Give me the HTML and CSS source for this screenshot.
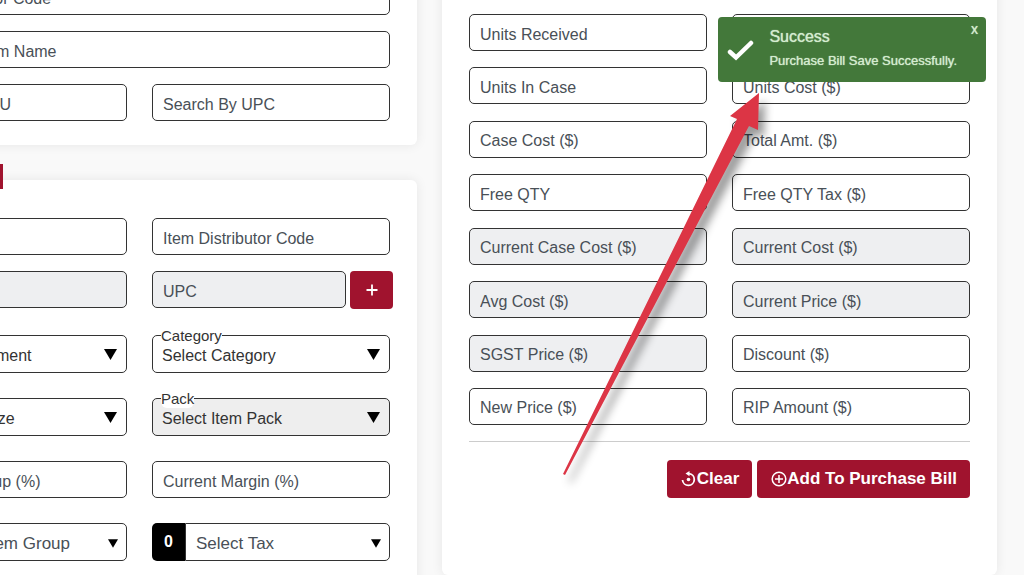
FILE: index.html
```html
<!DOCTYPE html>
<html lang="en">
<head>
<meta charset="utf-8">
<title>Purchase Bill</title>
<link rel="stylesheet" href="styles.css">
</head>
<body>
<main class="page">
  <div class="column">
    <section class="card card-search">
      <input class="field" type="text" placeholder="Item Distributor Code" aria-label="Item Distributor Code">
      <input class="field" type="text" placeholder="Search By Item Name" aria-label="Search By Item Name">
      <div class="pair">
        <input class="field" type="text" placeholder="Search By SKU" aria-label="Search By SKU">
        <input class="field" type="text" placeholder="Search By UPC" aria-label="Search By UPC">
      </div>
    </section>

    <section class="card card-item">
      <div class="card-tab"></div>
      <div class="item-top">
        <div class="pair">
          <input class="field" type="text" aria-label="Item Code">
          <input class="field" type="text" placeholder="Item Distributor Code" aria-label="Item Distributor Code">
        </div>
        <div class="pair">
          <input class="field" type="text" aria-label="SKU" disabled>
          <div class="upc">
            <input class="field" type="text" placeholder="UPC" aria-label="UPC" disabled>
            <button class="btn btn-plus" type="button" aria-label="Add UPC"><svg width="12" height="12" viewBox="0 0 12 12"><path d="M6 0.500v11M0.500 6h11" stroke="currentColor" stroke-width="1.800"/></svg></button>
          </div>
        </div>
      </div>
      <div class="pair">
        <div class="select">
          <select aria-label="Department"><option>Select Department</option></select>
          <svg class="arrow" viewBox="0 0 13 11"><path d="M0 0h13L6.500 11z"/></svg>
        </div>
        <div class="select">
          <label for="category">Category</label>
          <select id="category"><option>Select Category</option></select>
          <svg class="arrow" viewBox="0 0 13 11"><path d="M0 0h13L6.500 11z"/></svg>
        </div>
      </div>
      <div class="pair">
        <div class="select">
          <select aria-label="Size"><option>Select Item Size</option></select>
          <svg class="arrow" viewBox="0 0 13 11"><path d="M0 0h13L6.500 11z"/></svg>
        </div>
        <div class="select">
          <label for="pack">Pack</label>
          <select id="pack" disabled><option>Select Item Pack</option></select>
          <svg class="arrow" viewBox="0 0 13 11"><path d="M0 0h13L6.500 11z"/></svg>
        </div>
      </div>
      <div class="pair">
        <input class="field" type="text" placeholder="Current Markup (%)" aria-label="Current Markup (%)">
        <input class="field" type="text" placeholder="Current Margin (%)" aria-label="Current Margin (%)">
      </div>
      <div class="pair">
        <div class="select counted">
          <span class="count">0</span>
          <select aria-label="Item Group"><option>Select Item Group</option></select>
          <svg class="arrow" viewBox="0 0 13 11"><path d="M0 0h13L6.500 11z"/></svg>
        </div>
        <div class="select counted">
          <span class="count">0</span>
          <select aria-label="Tax"><option>Select Tax</option></select>
          <svg class="arrow" viewBox="0 0 13 11"><path d="M0 0h13L6.500 11z"/></svg>
        </div>
      </div>
    </section>
  </div>

  <section class="card card-cost">
    <div class="costs">
      <input class="field" type="text" placeholder="Units Received" aria-label="Units Received">
      <input class="field" type="text" aria-label="Cases Received">
      <input class="field" type="text" placeholder="Units In Case" aria-label="Units In Case">
      <input class="field" type="text" placeholder="Units Cost ($)" aria-label="Units Cost ($)">
      <input class="field" type="text" placeholder="Case Cost ($)" aria-label="Case Cost ($)">
      <input class="field" type="text" placeholder="Total Amt. ($)" aria-label="Total Amt. ($)">
      <input class="field" type="text" placeholder="Free QTY" aria-label="Free QTY">
      <input class="field" type="text" placeholder="Free QTY Tax ($)" aria-label="Free QTY Tax ($)">
      <input class="field" type="text" placeholder="Current Case Cost ($)" aria-label="Current Case Cost ($)" disabled>
      <input class="field" type="text" placeholder="Current Cost ($)" aria-label="Current Cost ($)" disabled>
      <input class="field" type="text" placeholder="Avg Cost ($)" aria-label="Avg Cost ($)" disabled>
      <input class="field" type="text" placeholder="Current Price ($)" aria-label="Current Price ($)" disabled>
      <input class="field" type="text" placeholder="SGST Price ($)" aria-label="SGST Price ($)" disabled>
      <input class="field" type="text" placeholder="Discount ($)" aria-label="Discount ($)">
      <input class="field" type="text" placeholder="New Price ($)" aria-label="New Price ($)">
      <input class="field" type="text" placeholder="RIP Amount ($)" aria-label="RIP Amount ($)">
    </div>
    <div class="actions">
      <button class="btn" type="button">
        <svg width="16" height="16" viewBox="0 0 16 16" fill="none" stroke="currentColor" stroke-width="1.800"><path d="M8 2.600a5.900 5.900 0 1 1-6.500 6.400"/><circle cx="7.500" cy="8.500" r="1.800" fill="currentColor" stroke="none"/><path d="M8.500 0v5.200L4.500 2.600z" fill="currentColor" stroke="none"/></svg>Clear
      </button>
      <button class="btn" type="button">
        <svg width="16" height="16" viewBox="0 0 16 16" fill="none" stroke="currentColor" stroke-width="1.500"><circle cx="8" cy="8" r="6.800"/><path d="M8 4v8M4 8h8"/></svg>Add To Purchase Bill
      </button>
    </div>
  </section>
</main>

<div class="toast" role="status">
  <svg class="toast-check" viewBox="0 0 27 21"><path d="M3 12l6 5.500L24 3" fill="none" stroke="#fff" stroke-width="4.500" stroke-linecap="round"/></svg>
  <div class="toast-text">
    <div class="toast-title">Success</div>
    <div class="toast-message">Purchase Bill Save Successfully.</div>
  </div>
  <button class="toast-close" type="button" aria-label="Close">x</button>
</div>

<svg class="pointer" viewBox="0 0 210 400" aria-hidden="true">
  <path d="M3 382L177 27L170 24L199 1L198 38L189 34L5 383z" fill="#dc3545"/>
</svg>
</body>
</html>
```
FILE: styles.css
```css
* { box-sizing: border-box; }

html { height: 100%; overflow: hidden; }

body {
  height: 100%;
  margin: 0;
  overflow: hidden;
  background: #f9f9f9;
  color: #444;
  font-family: "Liberation Sans", Arial, sans-serif;
  font-size: 16px;
}

input, select, button { font: inherit; }

/* The form is shown scrolled down and to the right. */
.page {
  display: grid;
  grid-template-columns: 1fr 1fr;
  gap: 25px;
  align-items: start;
  margin: -60px 0 0 -138px;
  padding-right: 27px;
}

.column { display: grid; gap: 35px; }

.card {
  position: relative;
  display: flex;
  flex-direction: column;
  padding: 38px 27px 24px;
  border-radius: 6px;
  background: #fff;
  box-shadow: 0 0 12px rgba(0, 0, 0, 0.08);
}

.card-search { gap: 16px; }
.card-item { gap: 25px; }
.card-cost { padding: 74px 27px 77px; }

.card-tab {
  position: absolute;
  top: -16px;
  left: 27px;
  width: 114px;
  height: 25px;
  background: #a0132e;
}

.pair {
  display: grid;
  grid-template-columns: 1fr 1fr;
  gap: 25px;
}

.item-top { display: grid; gap: 16px; margin-bottom: 2px; }

.field {
  width: 100%;
  min-width: 0;
  height: 37px;
  padding: 4px 10px 0;
  border: 1px solid #333;
  border-radius: 5px;
  background: #fff;
}

.field::placeholder { color: #495057; opacity: 1; }
.field:disabled { background: #eeeff1; }

.upc {
  display: flex;
  gap: 4px;
  height: 37px;
  margin-right: -3px;
}

.btn {
  display: flex;
  align-items: center;
  height: 38px;
  padding: 0 13px 0 14px;
  border: 0;
  border-radius: 4px;
  background: #a0132e;
  color: #fff;
  font-size: 17px;
  font-weight: bold;
}

.btn-plus { flex: none; justify-content: center; width: 43px; padding: 0; }

.select {
  position: relative;
  display: flex;
  height: 38px;
}

.select select {
  flex: 1;
  min-width: 0;
  padding: 3px 10px 0 9px;
  border: 1px solid #333;
  border-radius: 5px;
  background: #fff;
  color: #333;
  appearance: none;
}

.select select:disabled { background: #eee; opacity: 1; }

.select label {
  position: absolute;
  top: -8px;
  left: 9px;
  border-radius: 6px;
  background: #fff;
  color: #333;
  font-size: 15px;
  line-height: 18px;
}

.arrow {
  position: absolute;
  top: 14px;
  right: 10px;
  width: 13px;
  height: 11px;
  fill: #000;
  pointer-events: none;
}

.counted .arrow { top: 16px; right: 9px; width: 10px; height: 9px; }

.select.counted select {
  padding-left: 10px;
  border-radius: 0 5px 5px 0;
  color: #495057;
  font-size: 17px;
}

.count {
  display: flex;
  align-items: center;
  justify-content: center;
  width: 33px;
  border-radius: 5px 0 0 5px;
  background: #000;
  color: #fff;
  font-weight: bold;
}

.costs {
  display: grid;
  grid-template-columns: 1fr 1fr;
  column-gap: 25px;
  align-content: space-between;
  min-height: 411px;
}

.actions {
  display: flex;
  justify-content: flex-end;
  gap: 5px;
  margin-top: 16px;
  padding-top: 18px;
  border-top: 1px solid #ccc;
}

.toast {
  position: fixed;
  top: 17px;
  right: 38px;
  display: flex;
  align-items: center;
  padding: 9px 29px 8px 9px;
  border-radius: 4px;
  background: #43783a;
  color: #d5ecd0;
}

.toast-check { width: 27px; height: 21px; margin-right: 15px; }
.toast-title { font-size: 16px; line-height: 22px; text-shadow: 0 0 1px #d5ecd0; }
.toast-message { font-size: 13px; line-height: 26px; text-shadow: 0 0 1px #d5ecd0; }

.toast-close {
  position: absolute;
  top: 4px;
  right: 8px;
  padding: 0;
  border: 0;
  background: none;
  color: #d5ecd0;
  font-size: 14px;
  line-height: 16px;
  text-shadow: 0 0 1px #d5ecd0;
}

.pointer {
  position: fixed;
  top: 92px;
  left: 560px;
  width: 210px;
  height: 400px;
  overflow: visible;
  filter: drop-shadow(6px 8px 4px rgba(0, 0, 0, 0.4));
  pointer-events: none;
}
```
